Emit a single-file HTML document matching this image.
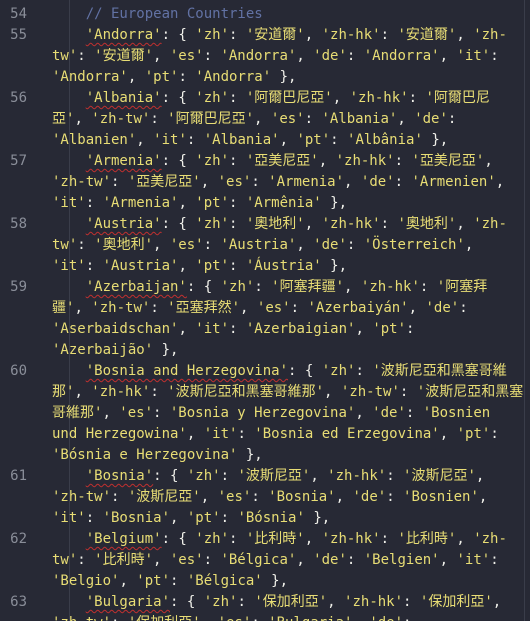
<!DOCTYPE html>
<html><head><meta charset="utf-8"><style>
html,body{margin:0;padding:0;background:#272935;width:530px;height:621px;overflow:hidden}
#ed{position:relative;width:530px;height:621px;font-family:"DejaVu Sans Mono","Liberation Mono","Noto Sans CJK JP",monospace;font-size:14px;color:#f0f0ea}
.r{position:absolute;left:52px;height:21px;line-height:21px;white-space:pre}
.n{position:absolute;left:0;width:27px;text-align:right;height:21px;line-height:21px;color:#8a8e99;font-size:14px}
.s{color:#e8dd75}
.k{color:#e8dd75;text-decoration:underline wavy #c0302f;text-decoration-thickness:1px;text-underline-offset:3px}
.c{color:#6272a4}
.g{position:absolute;left:69px;top:0;width:1px;height:621px;background:#3a3d4a}
.sb{position:absolute;left:524px;top:0;width:1px;height:621px;background:#3a3d4a}
</style></head><body><div id="ed">
<div class="g"></div><div class="sb"></div>
<div class="r" style="top:-17px">    <span class="c">//</span></div>
<div class="n" style="top:4px">54</div><div class="r" style="top:4px">    <span class="c">// European Countries</span></div>

<div class="n" style="top:25px">55</div>
<div class="r" style="top:25px">    <span class="k">'Andorra'</span>: { <span class="s">'zh'</span>: <span class="s">'安道爾'</span>, <span class="s">'zh-hk'</span>: <span class="s">'安道爾'</span>, <span class="s">'zh-</span></div>
<div class="r" style="top:46px"><span class="s">tw'</span>: <span class="s">'安道爾'</span>, <span class="s">'es'</span>: <span class="s">'Andorra'</span>, <span class="s">'de'</span>: <span class="s">'Andorra'</span>, <span class="s">'it'</span>:</div>
<div class="r" style="top:67px"><span class="s">'Andorra'</span>, <span class="s">'pt'</span>: <span class="s">'Andorra'</span> },</div>

<div class="n" style="top:88px">56</div>
<div class="r" style="top:88px">    <span class="k">'Albania'</span>: { <span class="s">'zh'</span>: <span class="s">'阿爾巴尼亞'</span>, <span class="s">'zh-hk'</span>: <span class="s">'阿爾巴尼</span></div>
<div class="r" style="top:109px"><span class="s">亞'</span>, <span class="s">'zh-tw'</span>: <span class="s">'阿爾巴尼亞'</span>, <span class="s">'es'</span>: <span class="s">'Albania'</span>, <span class="s">'de'</span>:</div>
<div class="r" style="top:130px"><span class="s">'Albanien'</span>, <span class="s">'it'</span>: <span class="s">'Albania'</span>, <span class="s">'pt'</span>: <span class="s">'Albânia'</span> },</div>

<div class="n" style="top:151px">57</div>
<div class="r" style="top:151px">    <span class="k">'Armenia'</span>: { <span class="s">'zh'</span>: <span class="s">'亞美尼亞'</span>, <span class="s">'zh-hk'</span>: <span class="s">'亞美尼亞'</span>,</div>
<div class="r" style="top:172px"><span class="s">'zh-tw'</span>: <span class="s">'亞美尼亞'</span>, <span class="s">'es'</span>: <span class="s">'Armenia'</span>, <span class="s">'de'</span>: <span class="s">'Armenien'</span>,</div>
<div class="r" style="top:193px"><span class="s">'it'</span>: <span class="s">'Armenia'</span>, <span class="s">'pt'</span>: <span class="s">'Armênia'</span> },</div>

<div class="n" style="top:214px">58</div>
<div class="r" style="top:214px">    <span class="k">'Austria'</span>: { <span class="s">'zh'</span>: <span class="s">'奧地利'</span>, <span class="s">'zh-hk'</span>: <span class="s">'奧地利'</span>, <span class="s">'zh-</span></div>
<div class="r" style="top:235px"><span class="s">tw'</span>: <span class="s">'奧地利'</span>, <span class="s">'es'</span>: <span class="s">'Austria'</span>, <span class="s">'de'</span>: <span class="s">'Österreich'</span>,</div>
<div class="r" style="top:256px"><span class="s">'it'</span>: <span class="s">'Austria'</span>, <span class="s">'pt'</span>: <span class="s">'Áustria'</span> },</div>

<div class="n" style="top:277px">59</div>
<div class="r" style="top:277px">    <span class="k">'Azerbaijan'</span>: { <span class="s">'zh'</span>: <span class="s">'阿塞拜疆'</span>, <span class="s">'zh-hk'</span>: <span class="s">'阿塞拜</span></div>
<div class="r" style="top:298px"><span class="s">疆'</span>, <span class="s">'zh-tw'</span>: <span class="s">'亞塞拜然'</span>, <span class="s">'es'</span>: <span class="s">'Azerbaiyán'</span>, <span class="s">'de'</span>:</div>
<div class="r" style="top:319px"><span class="s">'Aserbaidschan'</span>, <span class="s">'it'</span>: <span class="s">'Azerbaigian'</span>, <span class="s">'pt'</span>:</div>
<div class="r" style="top:340px"><span class="s">'Azerbaijão'</span> },</div>

<div class="n" style="top:361px">60</div>
<div class="r" style="top:361px">    <span class="k">'Bosnia and Herzegovina'</span>: { <span class="s">'zh'</span>: <span class="s">'波斯尼亞和黑塞哥維</span></div>
<div class="r" style="top:382px"><span class="s">那'</span>, <span class="s">'zh-hk'</span>: <span class="s">'波斯尼亞和黑塞哥維那'</span>, <span class="s">'zh-tw'</span>: <span class="s">'波斯尼亞和黑塞</span></div>
<div class="r" style="top:403px"><span class="s">哥維那'</span>, <span class="s">'es'</span>: <span class="s">'Bosnia y Herzegovina'</span>, <span class="s">'de'</span>: <span class="s">'Bosnien</span></div>
<div class="r" style="top:424px"><span class="s">und Herzegowina'</span>, <span class="s">'it'</span>: <span class="s">'Bosnia ed Erzegovina'</span>, <span class="s">'pt'</span>:</div>
<div class="r" style="top:445px"><span class="s">'Bósnia e Herzegovina'</span> },</div>

<div class="n" style="top:466px">61</div>
<div class="r" style="top:466px">    <span class="k">'Bosnia'</span>: { <span class="s">'zh'</span>: <span class="s">'波斯尼亞'</span>, <span class="s">'zh-hk'</span>: <span class="s">'波斯尼亞'</span>,</div>
<div class="r" style="top:487px"><span class="s">'zh-tw'</span>: <span class="s">'波斯尼亞'</span>, <span class="s">'es'</span>: <span class="s">'Bosnia'</span>, <span class="s">'de'</span>: <span class="s">'Bosnien'</span>,</div>
<div class="r" style="top:508px"><span class="s">'it'</span>: <span class="s">'Bosnia'</span>, <span class="s">'pt'</span>: <span class="s">'Bósnia'</span> },</div>

<div class="n" style="top:529px">62</div>
<div class="r" style="top:529px">    <span class="k">'Belgium'</span>: { <span class="s">'zh'</span>: <span class="s">'比利時'</span>, <span class="s">'zh-hk'</span>: <span class="s">'比利時'</span>, <span class="s">'zh-</span></div>
<div class="r" style="top:550px"><span class="s">tw'</span>: <span class="s">'比利時'</span>, <span class="s">'es'</span>: <span class="s">'Bélgica'</span>, <span class="s">'de'</span>: <span class="s">'Belgien'</span>, <span class="s">'it'</span>:</div>
<div class="r" style="top:571px"><span class="s">'Belgio'</span>, <span class="s">'pt'</span>: <span class="s">'Bélgica'</span> },</div>

<div class="n" style="top:592px">63</div>
<div class="r" style="top:592px">    <span class="k">'Bulgaria'</span>: { <span class="s">'zh'</span>: <span class="s">'保加利亞'</span>, <span class="s">'zh-hk'</span>: <span class="s">'保加利亞'</span>,</div>
<div class="r" style="top:613px"><span class="s">'zh-tw'</span>: <span class="s">'保加利亞'</span>, <span class="s">'es'</span>: <span class="s">'Bulgaria'</span>, <span class="s">'de'</span>:</div>
</div></body></html>
